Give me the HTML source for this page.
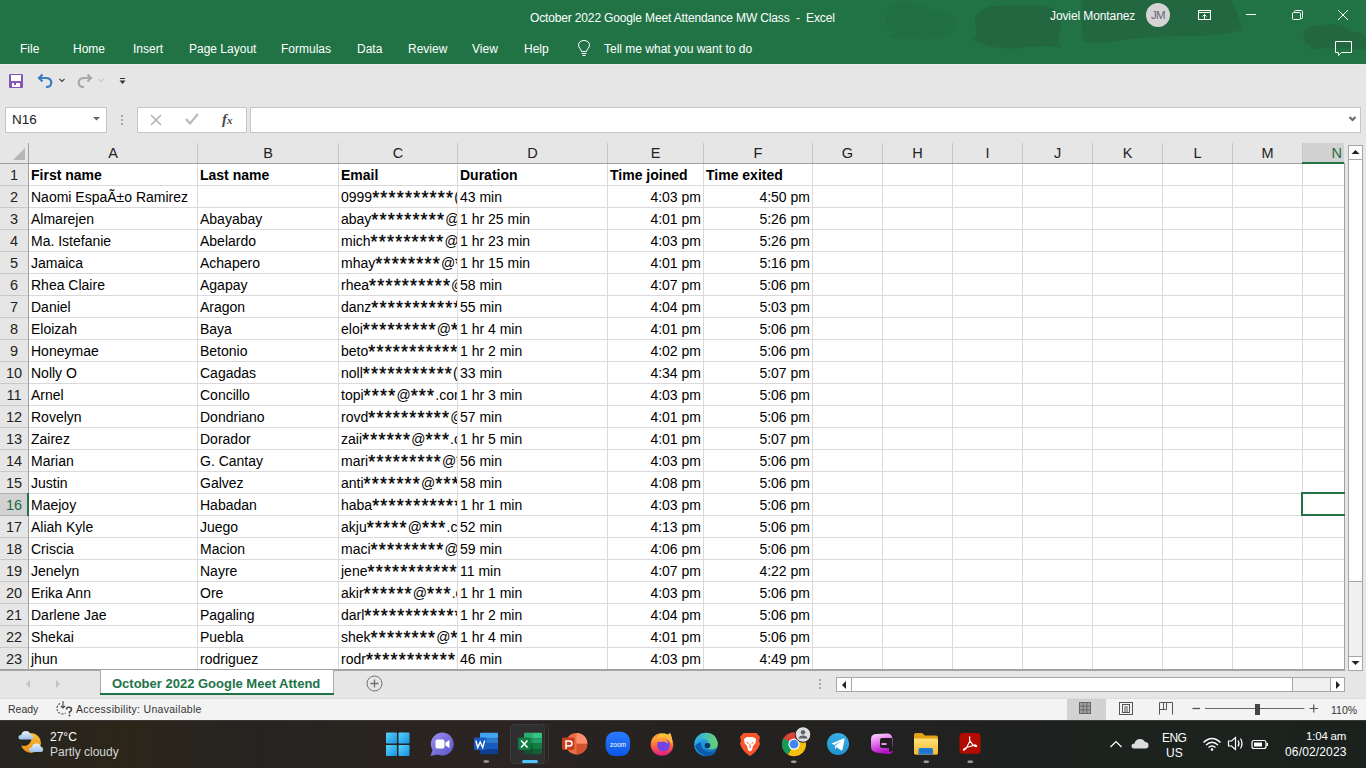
<!DOCTYPE html>
<html><head><meta charset="utf-8">
<style>
*{margin:0;padding:0;box-sizing:border-box}
html,body{width:1366px;height:768px;overflow:hidden;background:#e6e6e6;font-family:"Liberation Sans",sans-serif;position:relative}
.a{position:absolute}
#title{left:0;top:0;width:1366px;height:64px;background:#217346;overflow:hidden}
.tt{position:absolute;color:#fff;font-size:12px;white-space:nowrap;line-height:14px}
.tab{position:absolute;top:42px;color:#fff;font-size:12px;white-space:nowrap;line-height:14px}
#qat{left:0;top:64px;width:1366px;height:32px;background:#e6e6e6}
#fbar{left:0;top:96px;width:1366px;height:47px;background:#e6e6e6}
#sheet{left:0;top:143px;width:1366px;height:527px;background:#fff;overflow:hidden}
.ch{position:absolute;top:0;height:20px;background:#e6e6e6;font-size:14.5px;color:#222;text-align:center;line-height:21.5px}
.hsep{position:absolute;top:0;width:1px;height:20px;background:#c8c8c8}
.rsep{position:absolute;left:0;width:28px;height:1px;background:#c8c8c8}
.s{letter-spacing:1.2px;font-size:18px;position:relative;top:2px;line-height:14px;-webkit-text-stroke:0.35px #000}
.ch.sel{background:#d2d2d2;color:#1e6b42;text-align:right;padding-right:2px}
.rh{position:absolute;left:0;width:28px;height:21px;background:#e6e6e6;font-size:14.5px;color:#222;text-align:center;line-height:23px}
.rh.sel{background:#d2d2d2;color:#1e6b42}
.hl{position:absolute;left:0;width:1344px;height:1px;background:#dadada}
.vl{position:absolute;top:20px;width:1px;height:527px;background:#dadada}
.c{position:absolute;height:21px;font-size:14px;line-height:22px;color:#000;white-space:nowrap;overflow:hidden;padding-left:2px}
.c.b{font-weight:bold}
.c.r{text-align:right;padding-right:2px;padding-left:0}
#tabs{left:0;top:670px;width:1366px;height:28px;background:#e6e6e6}
#status{left:0;top:698px;width:1366px;height:22px;background:#f3f3f3}
#taskbar{left:0;top:720px;width:1366px;height:48px;background:linear-gradient(90deg,#262521 0%,#2c2519 9%,#262422 19%,#29241f 28%,#2a2423 37%,#242220 50%,#212121 70%,#1f2020 73%,#1c221e 80%,#1b221e 100%)}
</style></head><body>

<div id="title" class="a">
  <svg class="a" style="left:0;top:0" width="1366" height="64">
    <g fill="#22673f">
      <path fill="#216e44" d="M886 20 C886 6 898 1 912 3 C922 4 928 8 932 12 C938 10 950 12 954 20 C957 28 950 36 938 38 C925 40 905 37 888 38 L893 32 C888 28 886 24 886 20 Z"/>
      <path d="M975 25 C973 12 985 5 1000 6 C1015 5 1040 4 1052 8 C1062 14 1063 28 1058 40 L1061 48 C1050 45 1040 46 1020 48 C1000 50 985 46 971 39 C978 36 977 30 975 25 Z"/>
      <path d="M1083 0 L1230 0 C1236 8 1240 20 1242 30 C1225 34 1205 36 1185 36 C1160 36 1130 38 1110 42 C1095 44 1085 43 1083 40 C1082 25 1080 10 1083 0 Z"/>
      <path d="M1304 38 C1302 30 1310 25 1320 26 C1330 22 1345 25 1352 32 C1362 32 1366 35 1366 40 L1366 50 C1345 48 1325 47 1310 50 L1312 45 C1306 44 1304 41 1304 38 Z"/>
    </g>
  </svg>
  <div class="tt" style="left:530px;top:11px;letter-spacing:-0.15px">October 2022 Google Meet Attendance MW Class&nbsp; -&nbsp; Excel</div>
  <div class="tt" style="left:1050px;top:9px;letter-spacing:-0.1px">Joviel Montanez</div>
  <div class="a" style="left:1146px;top:3px;width:24px;height:24px;border-radius:50%;background:#d4d4d4;color:#6d6478;font-size:11.5px;letter-spacing:-0.6px;line-height:24px;text-align:center">JM</div>
  <svg class="a" style="left:1190px;top:0" width="176" height="64" fill="none" stroke="#fff" stroke-width="1">
    <rect x="8.5" y="10.5" width="12" height="9"/>
    <line x1="8.5" y1="12.5" x2="20.5" y2="12.5"/>
    <path d="M14.5 19 V14.5 M12.5 16.5 L14.5 14.5 L16.5 16.5"/>
    <line x1="56" y1="14.5" x2="66" y2="14.5"/>
    <rect x="102.5" y="12.5" width="8" height="7" rx="1"/>
    <path d="M104.5 12.5 V11.5 Q104.5 10.5 105.5 10.5 H111.5 Q112.5 10.5 112.5 11.5 V17.5 Q112.5 18.5 111.5 18.5 H110.5"/>
    <path d="M148 10 L158 20 M158 10 L148 20"/>
    <path d="M145.5 41.5 H161.5 V52.5 H151.5 L148.5 55.5 V52.5 H145.5 Z"/>
  </svg>
  <div class="tab" style="left:20px">File</div>
  <div class="tab" style="left:73px">Home</div>
  <div class="tab" style="left:133px">Insert</div>
  <div class="tab" style="left:189px">Page Layout</div>
  <div class="tab" style="left:281px">Formulas</div>
  <div class="tab" style="left:357px">Data</div>
  <div class="tab" style="left:408px">Review</div>
  <div class="tab" style="left:472px">View</div>
  <div class="tab" style="left:524px">Help</div>
  <svg class="a" style="left:576px;top:40px" width="16" height="18" fill="none" stroke="#fff" stroke-width="1">
    <path d="M5.5 11.5 C5.5 9.5 2.5 8 2.5 5 C2.5 2.5 4.5 0.5 8 0.5 C11.5 0.5 13.5 2.5 13.5 5 C13.5 8 10.5 9.5 10.5 11.5 Z"/>
    <line x1="5.5" y1="13.5" x2="10.5" y2="13.5"/>
    <line x1="6.5" y1="15.5" x2="9.5" y2="15.5"/>
  </svg>
  <div class="tab" style="left:604px">Tell me what you want to do</div>
</div>

<div id="qat" class="a">
  <div class="a" style="left:0;top:0;width:1366px;height:1px;background:#ececec"></div>
  <svg class="a" style="left:0;top:0" width="140" height="32">
    <path d="M9 11 Q9 10 10 10 H22 Q23 10 23 11 V23 Q23 24 22 24 H10 Q9 24 9 23 Z" fill="#8755b5"/>
    <rect x="11" y="11" width="10" height="6" fill="#fff"/>
    <rect x="12" y="19" width="8" height="4" fill="#fff"/>
    <rect x="14" y="19" width="2" height="2" fill="#8755b5"/>
    <g transform="translate(0,2)">
    <path d="M39.5 12 L45.5 12 C49.5 12 51.3 14 51.3 16.8 C51.3 19.6 49 21.3 46 20.8" fill="none" stroke="#3c7dc4" stroke-width="2.2"/>
    <path d="M42.5 8.5 L39 12 L42.5 15.5" fill="none" stroke="#3c7dc4" stroke-width="2.2"/>
    <path d="M59.5 13 L62 15.5 L64.5 13" fill="none" stroke="#444" stroke-width="1.2"/>
    <path d="M90.5 12 L84.5 12 C80.5 12 78.7 14 78.7 16.8 C78.7 19.6 81 21.3 84 20.8" fill="none" stroke="#a8a8a8" stroke-width="2.2"/>
    <path d="M87.5 8.5 L91 12 L87.5 15.5" fill="none" stroke="#a8a8a8" stroke-width="2.2"/>
    <path d="M98.5 13 L101 15.5 L103.5 13" fill="none" stroke="#b8b8b8" stroke-width="1"/>
    <rect x="120" y="12" width="5" height="1" fill="#333"/>
    <path d="M119.5 14.5 H125.5 L122.5 18 Z" fill="#333"/>
    </g>
  </svg>
</div>
<div id="fbar" class="a">
  <div class="a" style="left:5px;top:11px;width:102px;height:26px;background:#fff;border:1px solid #c6c6c6"></div>
  <div class="a" style="left:12px;top:17px;font-size:13.5px;color:#222;line-height:14px">N16</div>
  <svg class="a" style="left:0;top:0" width="260" height="47">
    <path d="M93 21 H100 L96.5 24.5 Z" fill="#666"/>
    <rect x="121" y="19" width="2" height="2" fill="#a6a6a6"/>
    <rect x="121" y="23" width="2" height="2" fill="#a6a6a6"/>
    <rect x="121" y="27" width="2" height="2" fill="#a6a6a6"/>
  </svg>
  <div class="a" style="left:137px;top:11px;width:110px;height:26px;background:#fff;border:1px solid #c6c6c6"></div>
  <svg class="a" style="left:137px;top:11px" width="110" height="26">
    <path d="M14 5 L24 15 M24 5 L14 15" stroke="#b2b2b2" stroke-width="1.6" fill="none" transform="translate(0,3)"/>
    <path d="M49 12 L53 16.5 L61 7" stroke="#b8b8b8" stroke-width="2" fill="none"/>
  </svg>
  <div class="a" style="left:222px;top:15px;font-family:'Liberation Serif',serif;font-style:italic;font-weight:bold;font-size:15px;color:#4a4a4a;line-height:16px">f<span style="font-size:11px">x</span></div>
  <div class="a" style="left:250px;top:11px;width:1111px;height:26px;background:#fff;border:1px solid #c6c6c6"></div>
  <svg class="a" style="left:1346px;top:19px" width="12" height="10"><path d="M3.5 2 L6.5 5 L9.5 2" stroke="#666" stroke-width="2" fill="none"/></svg>
</div>

<div id="sheet" class="a">
<div class="a" style="left:0;top:0;width:28px;height:20px;background:#e6e6e6"></div>
<svg class="a" style="left:0;top:0" width="28" height="20"><path d="M25 5 L25 17 L13 17 Z" fill="#b6b6b6"/></svg>
<div class="ch" style="left:29px;width:168px">A</div>
<div class="ch" style="left:198px;width:140px">B</div>
<div class="ch" style="left:339px;width:118px">C</div>
<div class="ch" style="left:458px;width:149px">D</div>
<div class="ch" style="left:608px;width:95px">E</div>
<div class="ch" style="left:704px;width:108px">F</div>
<div class="ch" style="left:813px;width:69px">G</div>
<div class="ch" style="left:883px;width:69px">H</div>
<div class="ch" style="left:953px;width:69px">I</div>
<div class="ch" style="left:1023px;width:69px">J</div>
<div class="ch" style="left:1093px;width:69px">K</div>
<div class="ch" style="left:1163px;width:69px">L</div>
<div class="ch" style="left:1233px;width:69px">M</div>
<div class="ch sel" style="left:1303px;width:41px">N</div>
<div class="rh" style="top:21px">1</div>
<div class="rh" style="top:43px">2</div>
<div class="rh" style="top:65px">3</div>
<div class="rh" style="top:87px">4</div>
<div class="rh" style="top:109px">5</div>
<div class="rh" style="top:131px">6</div>
<div class="rh" style="top:153px">7</div>
<div class="rh" style="top:175px">8</div>
<div class="rh" style="top:197px">9</div>
<div class="rh" style="top:219px">10</div>
<div class="rh" style="top:241px">11</div>
<div class="rh" style="top:263px">12</div>
<div class="rh" style="top:285px">13</div>
<div class="rh" style="top:307px">14</div>
<div class="rh" style="top:329px">15</div>
<div class="rh sel" style="top:351px">16</div>
<div class="rh" style="top:373px">17</div>
<div class="rh" style="top:395px">18</div>
<div class="rh" style="top:417px">19</div>
<div class="rh" style="top:439px">20</div>
<div class="rh" style="top:461px">21</div>
<div class="rh" style="top:483px">22</div>
<div class="rh" style="top:505px">23</div>
<div class="hl" style="top:42px"></div>
<div class="hl" style="top:64px"></div>
<div class="hl" style="top:86px"></div>
<div class="hl" style="top:108px"></div>
<div class="hl" style="top:130px"></div>
<div class="hl" style="top:152px"></div>
<div class="hl" style="top:174px"></div>
<div class="hl" style="top:196px"></div>
<div class="hl" style="top:218px"></div>
<div class="hl" style="top:240px"></div>
<div class="hl" style="top:262px"></div>
<div class="hl" style="top:284px"></div>
<div class="hl" style="top:306px"></div>
<div class="hl" style="top:328px"></div>
<div class="hl" style="top:350px"></div>
<div class="hl" style="top:372px"></div>
<div class="hl" style="top:394px"></div>
<div class="hl" style="top:416px"></div>
<div class="hl" style="top:438px"></div>
<div class="hl" style="top:460px"></div>
<div class="hl" style="top:482px"></div>
<div class="hl" style="top:504px"></div>
<div class="hl" style="top:526px"></div>
<div class="vl" style="left:197px"></div>
<div class="vl" style="left:338px"></div>
<div class="vl" style="left:457px"></div>
<div class="vl" style="left:607px"></div>
<div class="vl" style="left:703px"></div>
<div class="vl" style="left:812px"></div>
<div class="vl" style="left:882px"></div>
<div class="vl" style="left:952px"></div>
<div class="vl" style="left:1022px"></div>
<div class="vl" style="left:1092px"></div>
<div class="vl" style="left:1162px"></div>
<div class="vl" style="left:1232px"></div>
<div class="vl" style="left:1302px"></div>
<div class="hsep" style="left:197px"></div>
<div class="hsep" style="left:338px"></div>
<div class="hsep" style="left:457px"></div>
<div class="hsep" style="left:607px"></div>
<div class="hsep" style="left:703px"></div>
<div class="hsep" style="left:812px"></div>
<div class="hsep" style="left:882px"></div>
<div class="hsep" style="left:952px"></div>
<div class="hsep" style="left:1022px"></div>
<div class="hsep" style="left:1092px"></div>
<div class="hsep" style="left:1162px"></div>
<div class="hsep" style="left:1232px"></div>
<div class="hsep" style="left:1302px"></div>
<div class="rsep" style="top:42px"></div>
<div class="rsep" style="top:64px"></div>
<div class="rsep" style="top:86px"></div>
<div class="rsep" style="top:108px"></div>
<div class="rsep" style="top:130px"></div>
<div class="rsep" style="top:152px"></div>
<div class="rsep" style="top:174px"></div>
<div class="rsep" style="top:196px"></div>
<div class="rsep" style="top:218px"></div>
<div class="rsep" style="top:240px"></div>
<div class="rsep" style="top:262px"></div>
<div class="rsep" style="top:284px"></div>
<div class="rsep" style="top:306px"></div>
<div class="rsep" style="top:328px"></div>
<div class="rsep" style="top:350px"></div>
<div class="rsep" style="top:372px"></div>
<div class="rsep" style="top:394px"></div>
<div class="rsep" style="top:416px"></div>
<div class="rsep" style="top:438px"></div>
<div class="rsep" style="top:460px"></div>
<div class="rsep" style="top:482px"></div>
<div class="rsep" style="top:504px"></div>
<div class="rsep" style="top:526px"></div>
<div class="a" style="left:28px;top:0;width:1px;height:527px;background:#a0a0a0"></div>
<div class="a" style="left:0;top:20px;width:1302px;height:1px;background:#a0a0a0"></div>
<div class="a" style="left:1302px;top:19px;width:42px;height:2px;background:#217346"></div>
<div class="a" style="left:1344px;top:20px;width:1px;height:507px;background:#a0a0a0"></div>
<div class="a" style="left:1344px;top:0;width:1px;height:20px;background:#e6e6e6"></div>
<div class="a" style="left:0;top:526px;width:1345px;height:1px;background:#a0a0a0"></div>
<div class="a" style="left:0;top:350px;width:28px;height:1px;background:#b0b0b0"></div>
<div class="a" style="left:0;top:372px;width:28px;height:1px;background:#b0b0b0"></div>
<div class="a" style="left:27px;top:350px;width:2px;height:23px;background:#217346"></div>
<div class="a" style="left:1301px;top:349px;width:50px;height:24px;border:2px solid #217346"></div>
<div class="c b" style="top:21px;left:29px;width:168px">First name</div>
<div class="c b" style="top:21px;left:198px;width:140px">Last name</div>
<div class="c b" style="top:21px;left:339px;width:118px">Email</div>
<div class="c b" style="top:21px;left:458px;width:149px">Duration</div>
<div class="c b" style="top:21px;left:608px;width:95px">Time joined</div>
<div class="c b" style="top:21px;left:704px;width:108px">Time exited</div>
<div class="c" style="top:43px;left:29px;width:168px">Naomi EspaÃ±o Ramirez</div>
<div class="c" style="top:43px;left:339px;width:118px">0999<span class="s">**********</span>(</div>
<div class="c" style="top:43px;left:458px;width:149px">43 min</div>
<div class="c r" style="top:43px;left:607px;width:96px">4:03 pm</div>
<div class="c r" style="top:43px;left:703px;width:109px">4:50 pm</div>
<div class="c" style="top:65px;left:29px;width:168px">Almarejen</div>
<div class="c" style="top:65px;left:198px;width:140px">Abayabay</div>
<div class="c" style="top:65px;left:339px;width:118px">abay<span class="s">*********</span>@<span class="s">*</span></div>
<div class="c" style="top:65px;left:458px;width:149px">1 hr 25 min</div>
<div class="c r" style="top:65px;left:607px;width:96px">4:01 pm</div>
<div class="c r" style="top:65px;left:703px;width:109px">5:26 pm</div>
<div class="c" style="top:87px;left:29px;width:168px">Ma. Istefanie</div>
<div class="c" style="top:87px;left:198px;width:140px">Abelardo</div>
<div class="c" style="top:87px;left:339px;width:118px">mich<span class="s">*********</span>@<span class="s">*</span></div>
<div class="c" style="top:87px;left:458px;width:149px">1 hr 23 min</div>
<div class="c r" style="top:87px;left:607px;width:96px">4:03 pm</div>
<div class="c r" style="top:87px;left:703px;width:109px">5:26 pm</div>
<div class="c" style="top:109px;left:29px;width:168px">Jamaica</div>
<div class="c" style="top:109px;left:198px;width:140px">Achapero</div>
<div class="c" style="top:109px;left:339px;width:118px">mhay<span class="s">********</span>@<span class="s">***</span></div>
<div class="c" style="top:109px;left:458px;width:149px">1 hr 15 min</div>
<div class="c r" style="top:109px;left:607px;width:96px">4:01 pm</div>
<div class="c r" style="top:109px;left:703px;width:109px">5:16 pm</div>
<div class="c" style="top:131px;left:29px;width:168px">Rhea Claire</div>
<div class="c" style="top:131px;left:198px;width:140px">Agapay</div>
<div class="c" style="top:131px;left:339px;width:118px">rhea<span class="s">**********</span>@<span class="s">*</span></div>
<div class="c" style="top:131px;left:458px;width:149px">58 min</div>
<div class="c r" style="top:131px;left:607px;width:96px">4:07 pm</div>
<div class="c r" style="top:131px;left:703px;width:109px">5:06 pm</div>
<div class="c" style="top:153px;left:29px;width:168px">Daniel</div>
<div class="c" style="top:153px;left:198px;width:140px">Aragon</div>
<div class="c" style="top:153px;left:339px;width:118px">danz<span class="s">************</span></div>
<div class="c" style="top:153px;left:458px;width:149px">55 min</div>
<div class="c r" style="top:153px;left:607px;width:96px">4:04 pm</div>
<div class="c r" style="top:153px;left:703px;width:109px">5:03 pm</div>
<div class="c" style="top:175px;left:29px;width:168px">Eloizah</div>
<div class="c" style="top:175px;left:198px;width:140px">Baya</div>
<div class="c" style="top:175px;left:339px;width:118px">eloi<span class="s">*********</span>@<span class="s">***</span></div>
<div class="c" style="top:175px;left:458px;width:149px">1 hr 4 min</div>
<div class="c r" style="top:175px;left:607px;width:96px">4:01 pm</div>
<div class="c r" style="top:175px;left:703px;width:109px">5:06 pm</div>
<div class="c" style="top:197px;left:29px;width:168px">Honeymae</div>
<div class="c" style="top:197px;left:198px;width:140px">Betonio</div>
<div class="c" style="top:197px;left:339px;width:118px">beto<span class="s">************</span></div>
<div class="c" style="top:197px;left:458px;width:149px">1 hr 2 min</div>
<div class="c r" style="top:197px;left:607px;width:96px">4:02 pm</div>
<div class="c r" style="top:197px;left:703px;width:109px">5:06 pm</div>
<div class="c" style="top:219px;left:29px;width:168px">Nolly O</div>
<div class="c" style="top:219px;left:198px;width:140px">Cagadas</div>
<div class="c" style="top:219px;left:339px;width:118px">noll<span class="s">***********</span>(</div>
<div class="c" style="top:219px;left:458px;width:149px">33 min</div>
<div class="c r" style="top:219px;left:607px;width:96px">4:34 pm</div>
<div class="c r" style="top:219px;left:703px;width:109px">5:07 pm</div>
<div class="c" style="top:241px;left:29px;width:168px">Arnel</div>
<div class="c" style="top:241px;left:198px;width:140px">Concillo</div>
<div class="c" style="top:241px;left:339px;width:118px">topi<span class="s">****</span>@<span class="s">***</span>.com</div>
<div class="c" style="top:241px;left:458px;width:149px">1 hr 3 min</div>
<div class="c r" style="top:241px;left:607px;width:96px">4:03 pm</div>
<div class="c r" style="top:241px;left:703px;width:109px">5:06 pm</div>
<div class="c" style="top:263px;left:29px;width:168px">Rovelyn</div>
<div class="c" style="top:263px;left:198px;width:140px">Dondriano</div>
<div class="c" style="top:263px;left:339px;width:118px">rovd<span class="s">**********</span>@<span class="s">*</span></div>
<div class="c" style="top:263px;left:458px;width:149px">57 min</div>
<div class="c r" style="top:263px;left:607px;width:96px">4:01 pm</div>
<div class="c r" style="top:263px;left:703px;width:109px">5:06 pm</div>
<div class="c" style="top:285px;left:29px;width:168px">Zairez</div>
<div class="c" style="top:285px;left:198px;width:140px">Dorador</div>
<div class="c" style="top:285px;left:339px;width:118px">zaii<span class="s">******</span>@<span class="s">***</span>.com</div>
<div class="c" style="top:285px;left:458px;width:149px">1 hr 5 min</div>
<div class="c r" style="top:285px;left:607px;width:96px">4:01 pm</div>
<div class="c r" style="top:285px;left:703px;width:109px">5:07 pm</div>
<div class="c" style="top:307px;left:29px;width:168px">Marian</div>
<div class="c" style="top:307px;left:198px;width:140px">G. Cantay</div>
<div class="c" style="top:307px;left:339px;width:118px">mari<span class="s">*********</span>@<span class="s">*</span></div>
<div class="c" style="top:307px;left:458px;width:149px">56 min</div>
<div class="c r" style="top:307px;left:607px;width:96px">4:03 pm</div>
<div class="c r" style="top:307px;left:703px;width:109px">5:06 pm</div>
<div class="c" style="top:329px;left:29px;width:168px">Justin</div>
<div class="c" style="top:329px;left:198px;width:140px">Galvez</div>
<div class="c" style="top:329px;left:339px;width:118px">anti<span class="s">*******</span>@<span class="s">****</span></div>
<div class="c" style="top:329px;left:458px;width:149px">58 min</div>
<div class="c r" style="top:329px;left:607px;width:96px">4:08 pm</div>
<div class="c r" style="top:329px;left:703px;width:109px">5:06 pm</div>
<div class="c" style="top:351px;left:29px;width:168px">Maejoy</div>
<div class="c" style="top:351px;left:198px;width:140px">Habadan</div>
<div class="c" style="top:351px;left:339px;width:118px">haba<span class="s">************</span></div>
<div class="c" style="top:351px;left:458px;width:149px">1 hr 1 min</div>
<div class="c r" style="top:351px;left:607px;width:96px">4:03 pm</div>
<div class="c r" style="top:351px;left:703px;width:109px">5:06 pm</div>
<div class="c" style="top:373px;left:29px;width:168px">Aliah Kyle</div>
<div class="c" style="top:373px;left:198px;width:140px">Juego</div>
<div class="c" style="top:373px;left:339px;width:118px">akju<span class="s">*****</span>@<span class="s">***</span>.com</div>
<div class="c" style="top:373px;left:458px;width:149px">52 min</div>
<div class="c r" style="top:373px;left:607px;width:96px">4:13 pm</div>
<div class="c r" style="top:373px;left:703px;width:109px">5:06 pm</div>
<div class="c" style="top:395px;left:29px;width:168px">Criscia</div>
<div class="c" style="top:395px;left:198px;width:140px">Macion</div>
<div class="c" style="top:395px;left:339px;width:118px">maci<span class="s">*********</span>@<span class="s">*</span></div>
<div class="c" style="top:395px;left:458px;width:149px">59 min</div>
<div class="c r" style="top:395px;left:607px;width:96px">4:06 pm</div>
<div class="c r" style="top:395px;left:703px;width:109px">5:06 pm</div>
<div class="c" style="top:417px;left:29px;width:168px">Jenelyn</div>
<div class="c" style="top:417px;left:198px;width:140px">Nayre</div>
<div class="c" style="top:417px;left:339px;width:118px">jene<span class="s">************</span></div>
<div class="c" style="top:417px;left:458px;width:149px">11 min</div>
<div class="c r" style="top:417px;left:607px;width:96px">4:07 pm</div>
<div class="c r" style="top:417px;left:703px;width:109px">4:22 pm</div>
<div class="c" style="top:439px;left:29px;width:168px">Erika Ann</div>
<div class="c" style="top:439px;left:198px;width:140px">Ore</div>
<div class="c" style="top:439px;left:339px;width:118px">akir<span class="s">******</span>@<span class="s">***</span>.com</div>
<div class="c" style="top:439px;left:458px;width:149px">1 hr 1 min</div>
<div class="c r" style="top:439px;left:607px;width:96px">4:03 pm</div>
<div class="c r" style="top:439px;left:703px;width:109px">5:06 pm</div>
<div class="c" style="top:461px;left:29px;width:168px">Darlene Jae</div>
<div class="c" style="top:461px;left:198px;width:140px">Pagaling</div>
<div class="c" style="top:461px;left:339px;width:118px">darl<span class="s">************</span></div>
<div class="c" style="top:461px;left:458px;width:149px">1 hr 2 min</div>
<div class="c r" style="top:461px;left:607px;width:96px">4:04 pm</div>
<div class="c r" style="top:461px;left:703px;width:109px">5:06 pm</div>
<div class="c" style="top:483px;left:29px;width:168px">Shekai</div>
<div class="c" style="top:483px;left:198px;width:140px">Puebla</div>
<div class="c" style="top:483px;left:339px;width:118px">shek<span class="s">********</span>@<span class="s">***</span></div>
<div class="c" style="top:483px;left:458px;width:149px">1 hr 4 min</div>
<div class="c r" style="top:483px;left:607px;width:96px">4:01 pm</div>
<div class="c r" style="top:483px;left:703px;width:109px">5:06 pm</div>
<div class="c" style="top:505px;left:29px;width:168px">jhun</div>
<div class="c" style="top:505px;left:198px;width:140px">rodriguez</div>
<div class="c" style="top:505px;left:339px;width:118px">rodr<span class="s">***********</span>(</div>
<div class="c" style="top:505px;left:458px;width:149px">46 min</div>
<div class="c r" style="top:505px;left:607px;width:96px">4:03 pm</div>
<div class="c r" style="top:505px;left:703px;width:109px">4:49 pm</div>
</div>

<div id="tabs" class="a">
  <div class="a" style="left:0;top:0;width:1345px;height:1px;background:#a6a6a6"></div>
  <svg class="a" style="left:0;top:0" width="120" height="28">
    <path d="M30 10 L26 14 L30 18 Z" fill="#c2c2c2"/>
    <path d="M56 10 L60 14 L56 18 Z" fill="#c2c2c2"/>
  </svg>
  <div class="a" style="left:100px;top:0;width:234px;height:25px;background:#fff;border-left:1px solid #ababab;border-right:1px solid #ababab"></div>
  <div class="a" style="left:100px;top:23px;width:234px;height:2px;background:#217346"></div>
  <div class="a" style="left:112px;top:7px;font-size:13px;font-weight:bold;color:#217346;line-height:14px;white-space:nowrap">October 2022 Google Meet Attend</div>
  <svg class="a" style="left:364px;top:4px" width="22" height="22">
    <circle cx="10.5" cy="9.5" r="7.5" fill="none" stroke="#6f6f6f" stroke-width="1"/>
    <path d="M10.5 5.5 V13.5 M6.5 9.5 H14.5" stroke="#6f6f6f" stroke-width="1.3"/>
  </svg>
  <svg class="a" style="left:816px;top:0" width="10" height="28">
    <rect x="3" y="9" width="2" height="2" fill="#a6a6a6"/>
    <rect x="3" y="13" width="2" height="2" fill="#a6a6a6"/>
    <rect x="3" y="17" width="2" height="2" fill="#a6a6a6"/>
  </svg>
  <div class="a" style="left:836px;top:7px;width:509px;height:15px;background:#fff;border:1px solid #a6a6a6"></div>
  <div class="a" style="left:851px;top:7px;width:442px;height:15px;border-left:1px solid #a6a6a6;border-right:1px solid #a6a6a6"></div>
  <div class="a" style="left:1293px;top:8px;width:37px;height:13px;background:#f0f0f0"></div>
  <div class="a" style="left:1330px;top:7px;width:15px;height:15px;border-left:1px solid #a6a6a6"></div>
  <svg class="a" style="left:836px;top:7px" width="510" height="16">
    <path d="M10 4 L6 8 L10 12 Z" fill="#222"/>
    <path d="M500 4 L504 8 L500 12 Z" fill="#222"/>
  </svg>
</div>
<!-- vertical scrollbar -->
<div class="a" style="left:1345px;top:143px;width:21px;height:527px;background:#e6e6e6"></div>
<div class="a" style="left:1348px;top:145px;width:15px;height:526px;background:#fff;border:1px solid #a6a6a6"></div>
<div class="a" style="left:1348px;top:159px;width:15px;height:423px;border-top:1px solid #a6a6a6;border-bottom:1px solid #a6a6a6"></div>
<div class="a" style="left:1349px;top:582px;width:13px;height:74px;background:#f0f0f0"></div>
<div class="a" style="left:1348px;top:656px;width:15px;height:15px;border-top:1px solid #a6a6a6"></div>
<svg class="a" style="left:1348px;top:145px" width="15" height="526">
  <path d="M3.5 9 L7.5 5 L11.5 9 Z" fill="#222"/>
  <path d="M3.5 516 L7.5 520 L11.5 516 Z" fill="#222"/>
</svg>
<div id="status" class="a">
  <div class="a" style="left:0;top:0;width:1366px;height:1px;background:#dcdcdc"></div>
  <svg class="a" style="left:54px;top:2px" width="22" height="18" fill="none" stroke="#444" stroke-width="1.1">
    <path d="M9 1 V8 M6.8 5.8 L9 8 L11.2 5.8"/>
    <path d="M6 3.5 A5.5 5.5 0 1 0 11.5 13" stroke-dasharray="2 1.3"/>
    <path d="M12.5 9.5 Q12.5 7.3 15 7.3 Q17.5 7.3 17.5 9.5 Q17.5 11 15.5 12 V13.5" stroke-width="1.6"/>
    <circle cx="15.5" cy="15.5" r="0.9" fill="#444" stroke="none"/>
  </svg>
  <div class="a" style="left:8px;top:5px;font-size:10.5px;color:#333;line-height:12px">Ready</div>
  <div class="a" style="left:76px;top:5px;font-size:10.5px;color:#333;line-height:12px;letter-spacing:0.3px">Accessibility: Unavailable</div>
  <div class="a" style="left:1067px;top:1px;width:39px;height:21px;background:#d2d2d2"></div>
  <svg class="a" style="left:1060px;top:0" width="306" height="22" fill="none" stroke="#555" stroke-width="1">
    <rect x="19.5" y="4.5" width="11" height="11" fill="#a4a4a4" stroke="#666"/>
    <path d="M19.5 8.17 H30.5 M19.5 11.83 H30.5 M23.17 4.5 V15.5 M26.83 4.5 V15.5" stroke="#666"/>
    <rect x="59.5" y="4.5" width="13" height="12"/>
    <rect x="62.5" y="6.5" width="7" height="8"/>
    <path d="M64 9 H68 M64 11 H68 M64 13 H68"/>
    <path d="M99.5 16.5 V4.5 H112.5 V16.5 M99.5 11.5 H106.5 M103.5 4.5 V11.5 M106.5 4.5 V11.5"/>
    <path d="M132.5 10.5 H140" stroke-width="1.3"/>
    <path d="M145 10.5 H244.5" stroke="#666"/>
    <path d="M249.5 10.5 H258 M253.75 6.5 V14.5" stroke-width="1.2"/>
  </svg>
  <div class="a" style="left:1255px;top:6px;width:5px;height:11px;background:#444"></div>
  <div class="a" style="left:1331px;top:6px;font-size:10.5px;color:#333;line-height:12px">110%</div>
</div>
<div id="taskbar" class="a">
  <div class="a" style="left:0;top:0;width:1366px;height:1px;background:#3b3a38"></div>
  <div class="a" style="left:50px;top:10px;font-size:12px;color:#fff;line-height:14px">27°C</div>
  <div class="a" style="left:50px;top:25px;font-size:12px;color:#d6d6d6;line-height:14px">Partly cloudy</div>
  <div class="a" style="left:1162px;top:11px;font-size:12px;color:#fff;line-height:14px;letter-spacing:-0.6px">ENG</div>
  <div class="a" style="left:1166px;top:26px;font-size:12px;color:#fff;line-height:14px">US</div>
  <div class="a" style="left:1306px;top:9px;font-size:11.5px;color:#fff;line-height:14px;letter-spacing:-0.2px">1:04 am</div>
  <div class="a" style="left:1285px;top:25px;font-size:12px;color:#fff;line-height:14px;letter-spacing:0.15px">06/02/2023</div>
  <svg class="a" style="left:0;top:0" width="1366" height="48">
    <defs>
      <linearGradient id="gstart" x1="0" y1="0" x2="1" y2="1"><stop offset="0" stop-color="#5ad4fb"/><stop offset="1" stop-color="#1490e2"/></linearGradient>
      <linearGradient id="gmoon" x1="0" y1="0" x2="0" y2="1"><stop offset="0" stop-color="#f7c43a"/><stop offset="1" stop-color="#ef8a14"/></linearGradient>
      <linearGradient id="gcloud" x1="0" y1="0" x2="0" y2="1"><stop offset="0" stop-color="#e8f1fb"/><stop offset="1" stop-color="#9cc0ea"/></linearGradient>
      <linearGradient id="gteams" x1="0" y1="0" x2="1" y2="1"><stop offset="0" stop-color="#9a8ff0"/><stop offset="1" stop-color="#5b55c7"/></linearGradient>
      <linearGradient id="gzoom" x1="0" y1="0" x2="0" y2="1"><stop offset="0" stop-color="#2b7bff"/><stop offset="1" stop-color="#0b56e8"/></linearGradient>
      <linearGradient id="gedge" x1="0" y1="0" x2="1" y2="1"><stop offset="0" stop-color="#35c1f1"/><stop offset="0.5" stop-color="#1a8ee0"/><stop offset="1" stop-color="#0c59a4"/></linearGradient>
      <linearGradient id="gedge2" x1="0" y1="0" x2="1" y2="0"><stop offset="0" stop-color="#28b0ea"/><stop offset="1" stop-color="#6bd36a"/></linearGradient>
      <linearGradient id="gtg" x1="0" y1="0" x2="0" y2="1"><stop offset="0" stop-color="#38b0e3"/><stop offset="1" stop-color="#1d93d2"/></linearGradient>
      <linearGradient id="gff" x1="0" y1="0" x2="0" y2="1"><stop offset="0" stop-color="#ffd43a"/><stop offset="0.5" stop-color="#ff7139"/><stop offset="1" stop-color="#e31587"/></linearGradient>
      <linearGradient id="gfold" x1="0" y1="0" x2="0" y2="1"><stop offset="0" stop-color="#ffe27a"/><stop offset="1" stop-color="#f5b82e"/></linearGradient>
    </defs>
    <!-- weather -->
    <mask id="mmoon"><rect x="0" y="0" width="60" height="48" fill="#fff"/><circle cx="24" cy="18.5" r="7.5" fill="#000"/></mask>
    <circle cx="31" cy="23" r="10" fill="url(#gmoon)" mask="url(#mmoon)"/>
    <g fill="url(#gcloud)">
      <path d="M20.5 19.5 Q18.5 19.5 18.5 17.3 Q18.5 15 21.2 15 Q22 11 25.8 11 Q29.5 11 30.2 14.2 Q33.2 14.5 33.2 17 Q33.2 19.5 31 19.5 Z"/>
      <path d="M31 32 Q29 32 29 29.8 Q29 27.5 31.7 27.5 Q32.5 23.5 36.3 23.5 Q40 23.5 40.7 26.7 Q43.2 27 43.2 29.5 Q43.2 32 41 32 Z"/>
    </g>
    <!-- start -->
    <g fill="url(#gstart)">
      <rect x="386" y="12.5" width="11" height="11" rx="1"/>
      <rect x="398.5" y="12.5" width="11" height="11" rx="1"/>
      <rect x="386" y="25" width="11" height="11" rx="1"/>
      <rect x="398.5" y="25" width="11" height="11" rx="1"/>
    </g>
    <!-- teams chat -->
    <path d="M442 12.5 A11.5 11.5 0 1 1 437.5 34.5 L430.5 36 L432.5 30 A11.5 11.5 0 0 1 442 12.5 Z" fill="url(#gteams)"/>
    <rect x="435.5" y="19.5" width="9" height="9" rx="2" fill="#fff"/>
    <path d="M445.5 22.5 L449.5 20 V28 L445.5 25.5 Z" fill="#fff"/>
    <!-- word -->
    <rect x="480" y="12.8" width="18" height="5.4" rx="1.2" fill="#41a5ee"/>
    <rect x="480" y="18.2" width="18" height="5.4" fill="#2b7cd3"/>
    <rect x="480" y="23.6" width="18" height="5.4" fill="#185abd"/>
    <path d="M480 29 H498 V33 Q498 34.3 496.7 34.3 H481.3 Q480 34.3 480 33 Z" fill="#103f91"/>
    <rect x="474" y="17.6" width="12.5" height="12.3" rx="1.3" fill="#185abd"/>
    <path d="M475.8 20.5 L477.8 27.5 L480.2 22 L482.7 27.5 L484.7 20.5" fill="none" stroke="#fff" stroke-width="1.4"/>
    <rect x="483.5" y="40.2" width="5.5" height="2.5" rx="1.2" fill="#9a9a9a"/>
    <!-- excel active -->
    <rect x="512.5" y="4.5" width="36" height="39" rx="4" fill="none" stroke="#3a3a3a"/>
    <rect x="510.5" y="4.5" width="34" height="39" rx="4" fill="#2f2f2f" stroke="#3d3d3d"/>
    <rect x="524" y="12.8" width="18" height="5.4" rx="1.2" fill="#33c481"/>
    <rect x="524" y="18.2" width="18" height="5.4" fill="#21a366"/>
    <rect x="524" y="23.6" width="18" height="5.4" fill="#107c41"/>
    <path d="M524 29 H542 V33 Q542 34.3 540.7 34.3 H525.3 Q524 34.3 524 33 Z" fill="#185c37"/>
    <rect x="524" y="12.8" width="9" height="21.5" fill="#000" opacity="0.12"/>
    <rect x="518" y="17.6" width="12.5" height="12.3" rx="1.3" fill="#107c41"/>
    <path d="M521 20.5 L527.5 27.5 M527.5 20.5 L521 27.5" fill="none" stroke="#fff" stroke-width="1.6"/>
    <rect x="522" y="40" width="16" height="3" rx="1.5" fill="#4cc2ff"/>
    <!-- powerpoint -->
    <circle cx="576.5" cy="23.7" r="10.8" fill="#ed6c47"/>
    <path d="M576.5 12.9 A10.8 10.8 0 0 1 587.3 23.7 H576.5 Z" fill="#ff8f6b"/>
    <path d="M576.5 23.7 H587.3 A10.8 10.8 0 0 1 576.5 34.5 Z" fill="#d35230"/>
    <rect x="562" y="17.6" width="12.5" height="12.3" rx="1.3" fill="#c43e1c"/>
    <path d="M566 29 V21 H569.5 Q572 21 572 23.5 Q572 26 569.5 26 H566" fill="none" stroke="#fff" stroke-width="1.5"/>
    <!-- zoom -->
    <rect x="605.7" y="11.8" width="24.3" height="24.3" rx="9" fill="url(#gzoom)"/>
    <text x="618" y="26.5" font-family="Liberation Sans" font-size="6.5" fill="#fff" text-anchor="middle">zoom</text>
    <!-- firefox -->
    <circle cx="662" cy="24.5" r="11.3" fill="url(#gff)"/>
    <circle cx="663.5" cy="25" r="6.3" fill="#7542e5"/>
    <path d="M652 20 Q655 14 661 14 Q656 17 657 21 Q659 18 664 18.5 Q668 19.5 668 24 Q665 20.5 660 22 Z" fill="#ff9b3a"/>
    <path d="M664 13 Q668 16 670 12.5 Q673 18 672 24 Z" fill="#ffbd3f"/>
    <!-- edge -->
    <circle cx="706" cy="24.5" r="11.8" fill="url(#gedge)"/>
    <path d="M695.5 21 Q698 13 706 12.8 Q716 12.8 717.8 23 Q718 29 712 29.5 Q706 29.5 705.5 25.5 Q705 22 708.5 21.5 Q704 17.5 699 19.5 Q696.5 20.5 695.5 21 Z" fill="url(#gedge2)"/>
    <path d="M695 26 Q697 33 706 36 Q713 36.5 716 32 Q710 33.5 705 30.5 Q700 27 701 22 Q697 23 695 26 Z" fill="#0d5aa8"/>
    <circle cx="707.5" cy="25.5" r="2.8" fill="#0b3766"/>
    <!-- brave -->
    <path d="M743.5 13 H756.5 L760 17 L759 20 L760 24 Q757 32 750 36 Q743 32 740 24 L741 20 L740 17 Z" fill="#fb542b"/>
    <path d="M744 19 L747 17 H753 L756 19 L755.5 23 L753 26 L752 30 L750 31.5 L748 30 L747 26 L744.5 23 Z" fill="#fff"/>
    <path d="M746.5 22.5 L748.5 23.5 M753.5 22.5 L751.5 23.5 M750 24 V28" fill="none" stroke="#fb542b" stroke-width="1"/>
    <!-- chrome -->
    <circle cx="794" cy="24.2" r="12" fill="#db4437"/>
    <path d="M794 24.2 L804.4 18.2 A12 12 0 0 1 788 34.6 Z" fill="#f4c20d"/>
    <path d="M794 24.2 L788 34.6 A12 12 0 0 1 782 24.2 A12 12 0 0 1 783.6 18.2 Z" fill="#0f9d58"/>
    <circle cx="794" cy="24.2" r="5.6" fill="#fff"/>
    <circle cx="794" cy="24.2" r="4.4" fill="#4285f4"/>
    <circle cx="803" cy="14.5" r="7.8" fill="#dcdde0" stroke="#1e1f1d" stroke-width="1"/>
    <circle cx="803" cy="12.2" r="2.2" fill="#5f6368"/>
    <path d="M798.5 18.5 Q799 15.5 803 15.5 Q807 15.5 807.5 18.5 Z" fill="#5f6368"/>
    <rect x="791" y="40.5" width="5.5" height="2.5" rx="1.2" fill="#9a9a9a"/>
    <!-- telegram -->
    <circle cx="838" cy="24" r="11" fill="url(#gtg)"/>
    <path d="M831.5 23.5 L843.5 18.5 Q845 18 844.5 19.5 L842.5 29.5 Q842 31 840.5 30 L836.5 27 L835 29.5 L835 26 L841.5 20.5 L834.5 25 Z" fill="#fff"/>
    <!-- purple app -->
    <defs><linearGradient id="gpur" x1="0" y1="0" x2="0.3" y2="1"><stop offset="0" stop-color="#fbe3fc"/><stop offset="0.45" stop-color="#e77ef0"/><stop offset="1" stop-color="#b210c4"/></linearGradient></defs>
    <path d="M871 19 Q871 14 877 14 L887 13.5 Q892 13.5 892.5 19 V27 L889 28 V32 L893 31 Q893 33 889 34 L878 33 Q871 32 871 27 Z" fill="url(#gpur)"/>
    <path d="M880 20 Q880 18 882 18 H892 V28 H882 Q880 28 880 26 Z" fill="#1e1f1e"/>
    <rect x="881.5" y="23" width="5" height="2" fill="#f08cf5"/>
    <!-- explorer -->
    <path d="M914 15 Q914 13 916 13 H922 L925 15.5 H936 Q938 15.5 938 17.5 V33 Q938 34.4 936.6 34.4 H915.4 Q914 34.4 914 33 Z" fill="#e3a10f"/>
    <path d="M914 18.5 H936.5 Q938 18.5 938 20 V33 Q938 34.4 936.6 34.4 H915.4 Q914 34.4 914 33 Z" fill="url(#gfold)"/>
    <path d="M918.5 34.4 V29.5 Q918.5 28 920 28 H931.5 Q933 28 933 29.5 V34.4 Z" fill="#1f7ad6"/>
    <rect x="921" y="30.5" width="9.5" height="0.8" fill="#1660b0"/>
    <rect x="923.5" y="40.5" width="5.5" height="2.5" rx="1.2" fill="#9a9a9a"/>
    <!-- acrobat -->
    <rect x="959.5" y="13" width="21" height="20.8" rx="3.5" fill="#b30b00"/>
    <g fill="none" stroke="#fff" stroke-width="1.2">
      <path d="M970 16.5 Q969 17.5 970 21 L966 28.5 Q964 30.5 963.5 30 Q963 29 966.5 27.5 L975.5 25 Q977 25.8 976.5 26.5 Q975.5 27 973 25 L970 21"/>
    </g>
    <rect x="967.5" y="40.5" width="5.5" height="2.5" rx="1.2" fill="#9a9a9a"/>
    <!-- tray -->
    <path d="M1110.5 27 L1116 21.5 L1121.5 27" fill="none" stroke="#fff" stroke-width="1.2"/>
    <path d="M1134 28.5 Q1131.5 28.5 1131.5 26 Q1131.5 23.5 1134.5 23.5 Q1135.5 19 1140 19 Q1143.5 19 1145 22 Q1148.5 22 1148.5 25.3 Q1148.5 28.5 1145.5 28.5 Z" fill="#dcdcdc"/>
    <g fill="none" stroke="#fff" stroke-width="1.3">
      <path d="M1203.5 22.5 Q1212 14.5 1220.5 22.5"/>
      <path d="M1206 25 Q1212 19.5 1218 25"/>
      <path d="M1208.5 27.5 Q1212 24.5 1215.5 27.5"/>
    </g>
    <circle cx="1212" cy="29.5" r="1.3" fill="#fff"/>
    <g fill="none" stroke="#fff" stroke-width="1.2">
      <path d="M1228.5 21 H1231.5 L1235.5 17.5 V29.5 L1231.5 26 H1228.5 Z"/>
      <path d="M1238 20.5 Q1240 23.5 1238 26.5"/>
      <path d="M1240.5 18.5 Q1243.5 23.5 1240.5 28.5"/>
    </g>
    <rect x="1252" y="20.5" width="14" height="8" rx="2" fill="none" stroke="#fff" stroke-width="1.2"/>
    <rect x="1254" y="22.5" width="8" height="4" fill="#fff"/>
    <rect x="1266.5" y="23" width="1.5" height="3" fill="#fff"/>
  </svg>
</div>
</body></html>
